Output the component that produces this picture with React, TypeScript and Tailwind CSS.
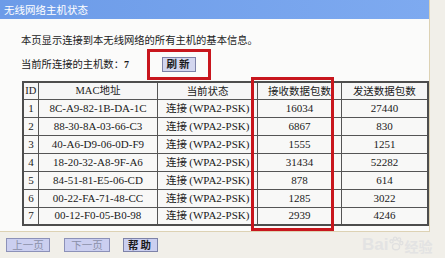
import React from "react";

const cjk = { fontFamily: '"Noto Sans CJK SC", "Noto Sans", sans-serif' };
const serif = { fontFamily: '"Liberation Serif", "Noto Sans CJK SC", serif' };

const rows = [
  ["1", "8C-A9-82-1B-DA-1C", "16034", "27440"],
  ["2", "88-30-8A-03-66-C3", "6867", "830"],
  ["3", "40-A6-D9-06-0D-F9", "1555", "1251"],
  ["4", "18-20-32-A8-9F-A6", "31434", "52282"],
  ["5", "84-51-81-E5-06-CD", "878", "614"],
  ["6", "00-22-FA-71-48-CC", "1285", "3022"],
  ["7", "00-12-F0-05-B0-98", "2939", "4246"],
];

export default function App() {
  return (
    <div
      className="relative w-[445px] h-[258px] overflow-hidden bg-[#f1efe9] flex flex-col text-[#1a1a1a]"
      style={cjk}
    >
      <div className="relative w-[430px] h-[232px] shrink-0 bg-[#fbfbfa] border-r border-b border-[#ddd2b4] flex flex-col">
        <div className="h-[19px] shrink-0 bg-gradient-to-r from-[#6c9be8] to-[#7eaaf0] text-white text-[10.5px] leading-[19px] pl-[4px]">
          无线网络主机状态
        </div>
        <div className="mt-[14px] h-[14px] leading-[14px] pl-[21px] text-[10.3px]">
          本页显示连接到本无线网络的所有主机的基本信息。
        </div>
        <div className="relative mt-[1px] h-[32px] flex items-center pl-[21px] text-[10.3px]">
          <span className="w-[141px] shrink-0">
            当前所连接的主机数：<span style={serif} className="font-bold text-[10px]">7</span>
          </span>
          <div className="w-[34px] h-[15px] mt-[1px] bg-[#d3d6ef] border border-[#7d82a8] flex items-center justify-center text-[10.5px] font-bold tracking-[2px] leading-none">
            刷新
          </div>
          <div className="absolute left-[147px] top-[1px] w-[64px] h-[31px] border-[3px] border-[#c8161d]" />
        </div>
        <table className="ml-[22px] mt-[1px] border-collapse border-2 border-[#4d4d4d] text-[10.5px]">
          <thead>
            <tr className="h-[17px] bg-[#f6f6f6]">
              <th className="w-[15px] p-0 border border-[#555] font-normal leading-none" style={serif}>ID</th>
              <th className="w-[117px] p-0 border border-[#555] font-normal leading-none">
                <span style={serif}>MAC</span>地址
              </th>
              <th className="w-[98px] p-0 border border-[#555] font-normal leading-none">当前状态</th>
              <th className="w-[82px] p-0 border border-[#555] font-normal leading-none">接收数据包数</th>
              <th className="w-[85px] p-0 border border-[#555] font-normal leading-none">发送数据包数</th>
            </tr>
          </thead>
          <tbody>
            {rows.map((r) => (
              <tr key={r[0]} className="h-[18px] bg-[#f8f8f7]">
                <td className="p-0 border border-[#555] text-center text-[11px] leading-none" style={serif}>{r[0]}</td>
                <td className="p-0 border border-[#555] text-center text-[11px] leading-none" style={serif}>{r[1]}</td>
                <td className="p-0 border border-[#555] text-center leading-none">
                  连接 <span style={serif} className="text-[11px]">(WPA2-PSK)</span>
                </td>
                <td className="p-0 border border-[#555] text-center text-[11px] leading-none" style={serif}>{r[2]}</td>
                <td className="p-0 border border-[#555] text-center text-[11px] leading-none" style={serif}>{r[3]}</td>
              </tr>
            ))}
          </tbody>
        </table>
        <div className="absolute left-[251px] top-[77px] w-[83px] h-[154px] border-[3px] border-[#c8161d]" />
      </div>
      <div className="flex-1 flex items-center pl-[6px] text-[10.5px]">
        <div className="w-[44px] h-[14px] bg-[#cbcff0] border border-[#8c91b8] flex items-center justify-center text-[#8a8fa8] leading-none">
          上一页
        </div>
        <div className="ml-[14px] w-[46px] h-[14px] bg-[#cbcff0] border border-[#8c91b8] flex items-center justify-center text-[#8a8fa8] leading-none">
          下一页
        </div>
        <div className="ml-[13px] w-[35px] h-[14px] bg-[#cbcff0] border border-[#7d82a8] flex items-center justify-center font-bold tracking-[2px] leading-none">
          帮助
        </div>
      </div>
      <div className="absolute left-[362px] top-[236px] flex items-end text-[#e3e3e3] font-bold leading-none">
        <span className="text-[17px]" style={{ fontFamily: '"Liberation Sans", sans-serif' }}>Bai</span>
        <svg width="16" height="16" viewBox="0 0 18 18" className="mb-[1px]">
          <g fill="none" stroke="#e0e0e0" strokeWidth="1.5">
            <ellipse cx="9" cy="12" rx="4" ry="3.5" />
            <circle cx="4" cy="6" r="1.8" />
            <circle cx="8" cy="3" r="1.8" />
            <circle cx="12.5" cy="4" r="1.8" />
            <circle cx="15" cy="8" r="1.8" />
          </g>
        </svg>
        <span className="text-[14px]">经验</span>
      </div>
    </div>
  );
}
